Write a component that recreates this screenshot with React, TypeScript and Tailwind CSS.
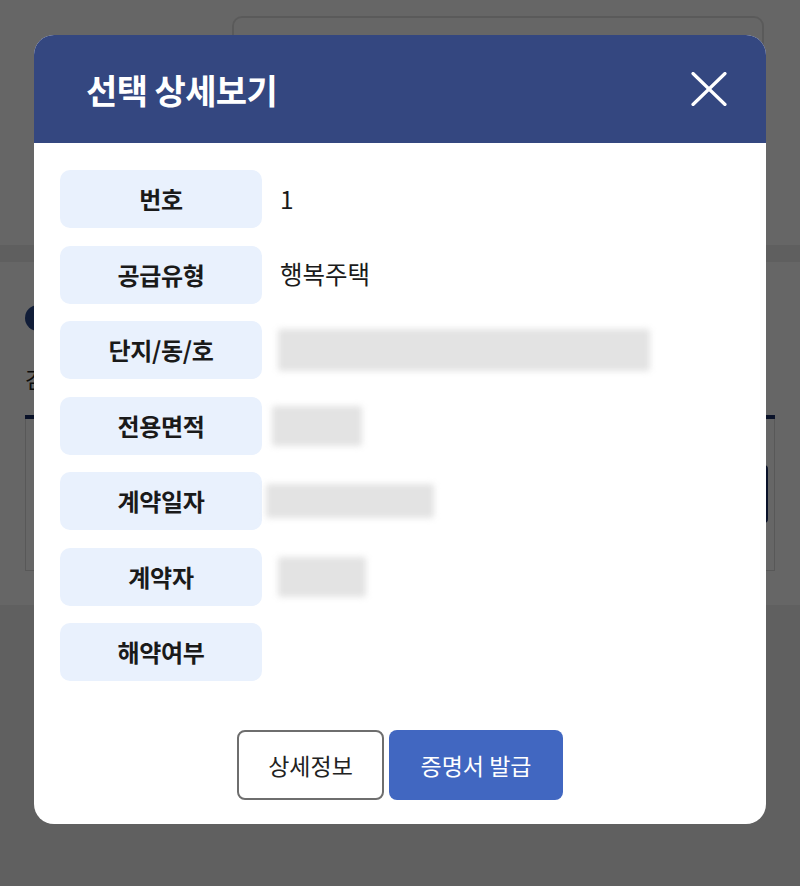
import React from 'react';

type Row = {
  label: string;
  value?: string;
  blur?: string;
};

const rows: Row[] = [
  { label: '번호', value: '1' },
  { label: '공급유형', value: '행복주택' },
  { label: '단지/동/호', blur: 'ml-[16px] w-[372px] h-[42px]' },
  { label: '전용면적', blur: 'ml-[10px] w-[90px] h-[40px]' },
  { label: '계약일자', blur: 'ml-[4px] w-[168px] h-[34px]' },
  { label: '계약자', blur: 'ml-[16px] w-[88px] h-[40px]' },
  { label: '해약여부' },
];

function CloseIcon() {
  return (
    <svg width="36" height="34" viewBox="0 0 36 34" fill="none">
      <path d="M2 1.5L34 32.5M34 1.5L2 32.5" stroke="#ffffff" strokeWidth="3.2" strokeLinecap="round" />
    </svg>
  );
}

function BackgroundPage() {
  return (
    <div className="flex flex-col h-[886px]">
      {/* top section */}
      <div className="h-[245px] bg-white pt-[16px] pl-[232px] pr-[36px]">
        <div className="h-[240px] rounded-[10px] border-2 border-[#e2e2e2] bg-white" />
      </div>
      <div className="h-[17px] bg-[#ededed]" />
      {/* middle section */}
      <div className="h-[343px] bg-white px-[25px] pt-[43px]">
        <div className="w-[26px] h-[26px] rounded-full bg-[#2c4a8c]" />
        <div className="mt-[34px] text-[22px] leading-[26px] text-[#222]">검</div>
        <div className="mt-[24px] h-[4px] bg-[#1b2f66]" />
        <div className="h-[152px] border-x border-b border-[#dddddd] flex justify-end items-start pt-[46px] pr-[6px]">
          <div className="w-[16px] h-[58px] rounded-r-[4px] border-2 border-[#1b2f66]" />
        </div>
      </div>
      <div className="flex-1 bg-[#f1f1f1]" />
    </div>
  );
}

export default function App() {
  return (
    <div
      className="relative w-[800px] h-[886px] overflow-hidden"
      style={{ fontFamily: '"Noto Sans CJK KR", "Noto Sans", sans-serif' }}
    >
      <BackgroundPage />

      {/* dim overlay + modal */}
      <div className="absolute inset-0 bg-black/60 pt-[35px] pl-[34px]">
        <div className="w-[732px] h-[789px] rounded-[20px] bg-white overflow-hidden flex flex-col">
          <header className="h-[108px] bg-[#344780] flex items-center justify-between pl-[52px] pr-[39px]">
            <h2 className="text-[34px] font-bold text-white tracking-[-0.6px]">선택 상세보기</h2>
            <CloseIcon />
          </header>

          <div className="flex flex-col gap-[17.5px] pt-[27px] pl-[26px]">
            {rows.map(r => (
              <div key={r.label} className="flex items-center">
                <div className="w-[202px] h-[58px] rounded-[10px] bg-[#e9f1fd] flex items-center justify-center">
                  <span className="text-[24px] font-bold text-[#1a1a1a] tracking-[-0.3px]">{r.label}</span>
                </div>
                {r.value && (
                  <span className="ml-[18px] text-[24.5px] text-[#1a1a1a]">{r.value}</span>
                )}
                {r.blur && (
                  <div className={`${r.blur} bg-[#e3e3e3] blur-[3px] rounded-[2px]`} />
                )}
              </div>
            ))}
          </div>

          <div className="flex justify-center gap-[5px] mt-[49px]">
            <button className="w-[147px] h-[70px] rounded-[8px] border-2 border-[#6e6e6e] bg-white text-[23px] text-[#222]">
              상세정보
            </button>
            <button className="w-[174px] h-[70px] rounded-[8px] bg-[#4167c1] text-[23px] text-white">
              증명서 발급
            </button>
          </div>
        </div>
      </div>
    </div>
  );
}
